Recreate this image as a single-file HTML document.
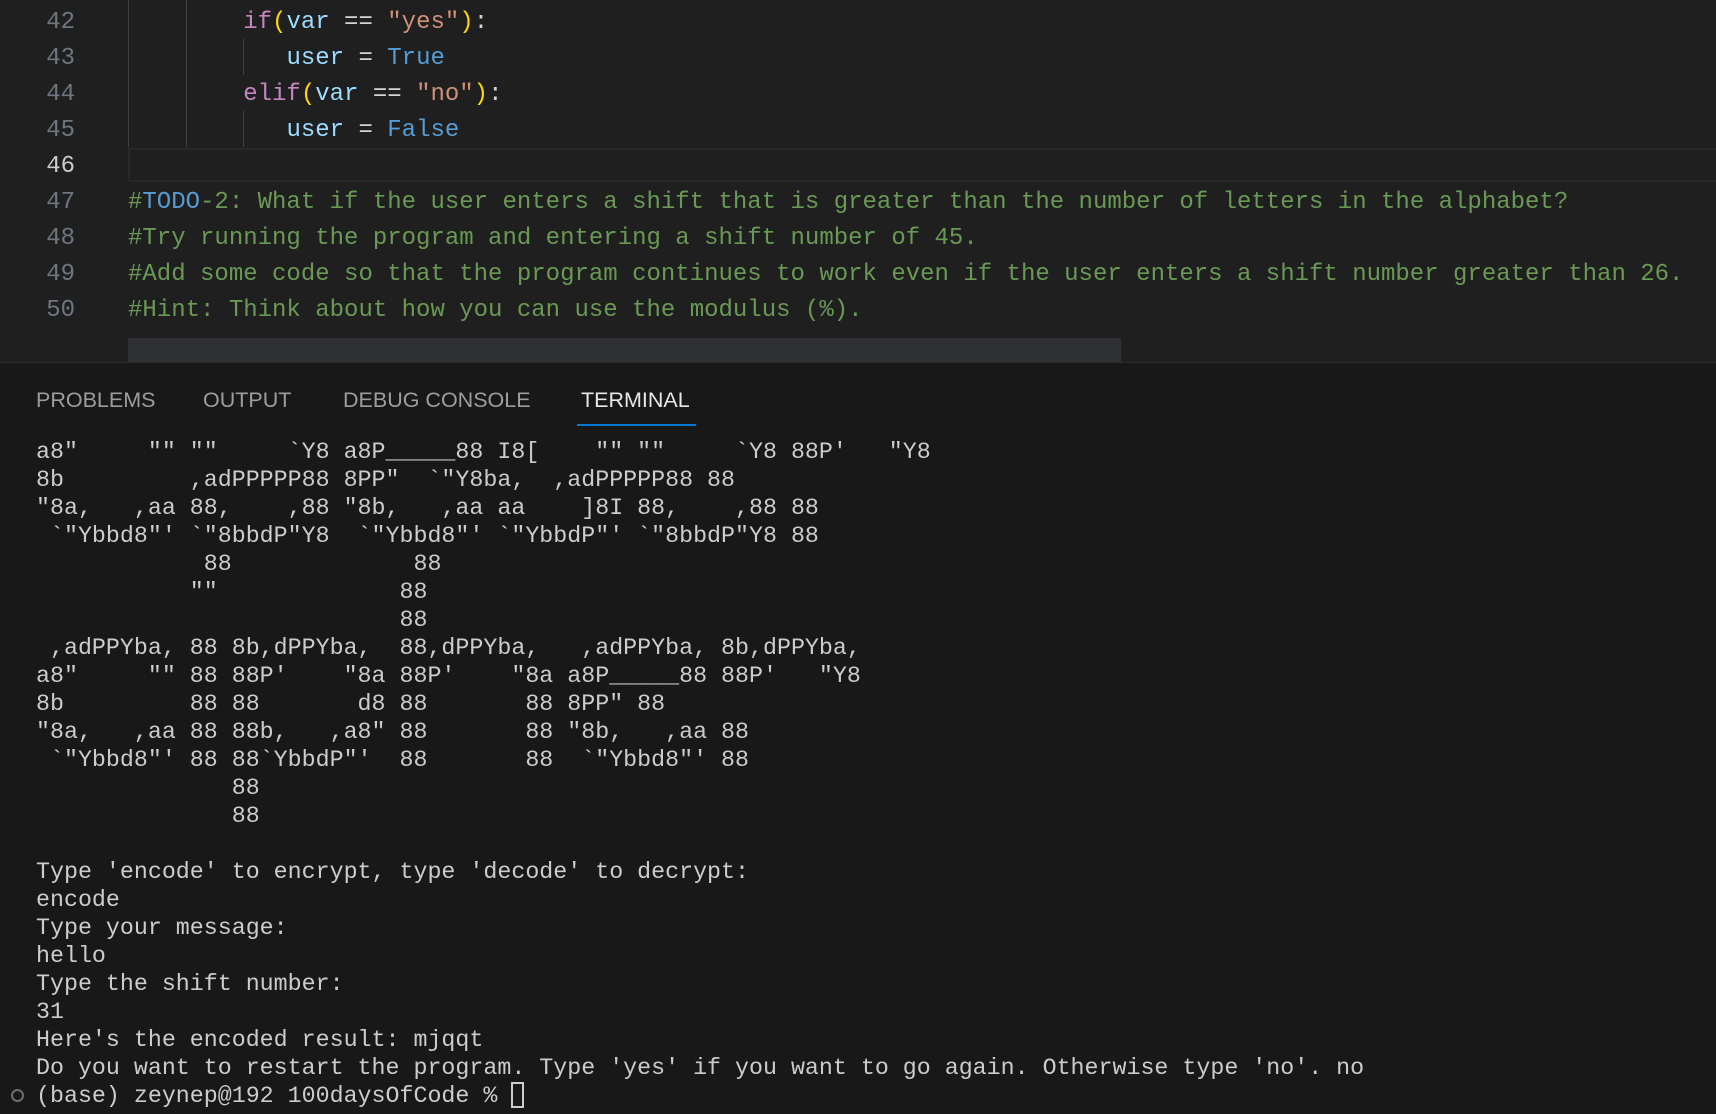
<!DOCTYPE html>
<html><head><meta charset="utf-8"><style>
*{margin:0;padding:0;box-sizing:border-box}
html,body{width:1716px;height:1114px;overflow:hidden;background:#1f1f1f}
.ed{position:absolute;left:0;top:0;width:1716px;height:362px;background:#1f1f1f;font-family:"Liberation Mono",monospace;font-size:24px;}
.ln{position:absolute;left:0;width:75px;text-align:right;color:#6e7681;line-height:36px;height:36px}
.cl{position:absolute;left:128px;white-space:pre;line-height:36px;height:36px;color:#cccccc}
.g{position:absolute;width:1px;background:#404040}
.k{color:#c586c0}.p{color:#ffd700}.v{color:#9cdcfe}.s{color:#ce9178}.b{color:#569cd6}.c{color:#6a9955}.w{color:#d4d4d4}
.panel{position:absolute;left:0;top:362px;width:1716px;height:752px;background:#181818;border-top:1px solid #2b2b2b}
.tab{position:absolute;top:24px;font-family:"Liberation Sans",sans-serif;font-size:21.5px;color:#9d9d9d;line-height:26px}
.term{position:absolute;left:36px;top:75px;font-family:"Liberation Mono",monospace;font-size:23.3px;line-height:28px;color:#cccccc;white-space:pre}
</style></head><body>
<div class="ed">
  <div class="g" style="left:128px;top:0;height:147px"></div>
  <div class="g" style="left:186px;top:0;height:147px"></div>
  <div class="g" style="left:243px;top:39px;height:36px"></div>
  <div class="g" style="left:243px;top:111px;height:36px"></div>
  <div style="position:absolute;left:128px;top:148px;width:1588px;height:34px;border:2px solid #282828;border-right:none"></div>
  <div class="ln" style="top:5px">42</div>
  <div class="ln" style="top:41px">43</div>
  <div class="ln" style="top:77px">44</div>
  <div class="ln" style="top:113px">45</div>
  <div class="ln" style="top:149px;color:#cccccc">46</div>
  <div class="ln" style="top:185px">47</div>
  <div class="ln" style="top:221px">48</div>
  <div class="ln" style="top:257px">49</div>
  <div class="ln" style="top:293px">50</div>
  <div class="cl" style="top:5px">        <span class="k">if</span><span class="p">(</span><span class="v">var</span><span class="w"> == </span><span class="s">"yes"</span><span class="p">)</span><span class="w">:</span></div>
  <div class="cl" style="top:41px">           <span class="v">user</span><span class="w"> = </span><span class="b">True</span></div>
  <div class="cl" style="top:77px">        <span class="k">elif</span><span class="p">(</span><span class="v">var</span><span class="w"> == </span><span class="s">"no"</span><span class="p">)</span><span class="w">:</span></div>
  <div class="cl" style="top:113px">           <span class="v">user</span><span class="w"> = </span><span class="b">False</span></div>
  <div class="cl c" style="top:185px">#<span class="b">TODO</span>-2: What if the user enters a shift that is greater than the number of letters in the alphabet?</div>
  <div class="cl c" style="top:221px">#Try running the program and entering a shift number of 45.</div>
  <div class="cl c" style="top:257px">#Add some code so that the program continues to work even if the user enters a shift number greater than 26.</div>
  <div class="cl c" style="top:293px">#Hint: Think about how you can use the modulus (%).</div>
  <div style="position:absolute;left:128px;top:338px;width:993px;height:24px;background:#2f3033"></div>
</div>
<div class="panel">
  <div class="tab" style="left:36px">PROBLEMS</div>
  <div class="tab" style="left:203px">OUTPUT</div>
  <div class="tab" style="left:343px">DEBUG CONSOLE</div>
  <div class="tab" style="left:581px;color:#e7e7e7">TERMINAL</div>
  <div style="position:absolute;left:577px;top:61px;width:119px;height:2px;background:#0078d4"></div>
  <div class="term">a8"     "" ""     `Y8 a8P_____88 I8[    "" ""     `Y8 88P'   "Y8
8b         ,adPPPPP88 8PP"  `"Y8ba,  ,adPPPPP88 88
"8a,   ,aa 88,    ,88 "8b,   ,aa aa    ]8I 88,    ,88 88
 `"Ybbd8"' `"8bbdP"Y8  `"Ybbd8"' `"YbbdP"' `"8bbdP"Y8 88
            88             88
           ""             88
                          88
 ,adPPYba, 88 8b,dPPYba,  88,dPPYba,   ,adPPYba, 8b,dPPYba,
a8"     "" 88 88P'    "8a 88P'    "8a a8P_____88 88P'   "Y8
8b         88 88       d8 88       88 8PP" 88
"8a,   ,aa 88 88b,   ,a8" 88       88 "8b,   ,aa 88
 `"Ybbd8"' 88 88`YbbdP"'  88       88  `"Ybbd8"' 88
              88
              88

Type 'encode' to encrypt, type 'decode' to decrypt:
encode
Type your message:
hello
Type the shift number:
31
Here's the encoded result: mjqqt
Do you want to restart the program. Type 'yes' if you want to go again. Otherwise type 'no'. no
(base) zeynep@192 100daysOfCode % <span style="display:inline-block;width:13px;height:26px;border:2px solid #cccccc;vertical-align:-6px"></span></div>
  <div style="position:absolute;left:11px;top:726px;width:13px;height:13px;border:2px solid #6e6e6e;border-radius:50%"></div>
</div>
</body></html>
